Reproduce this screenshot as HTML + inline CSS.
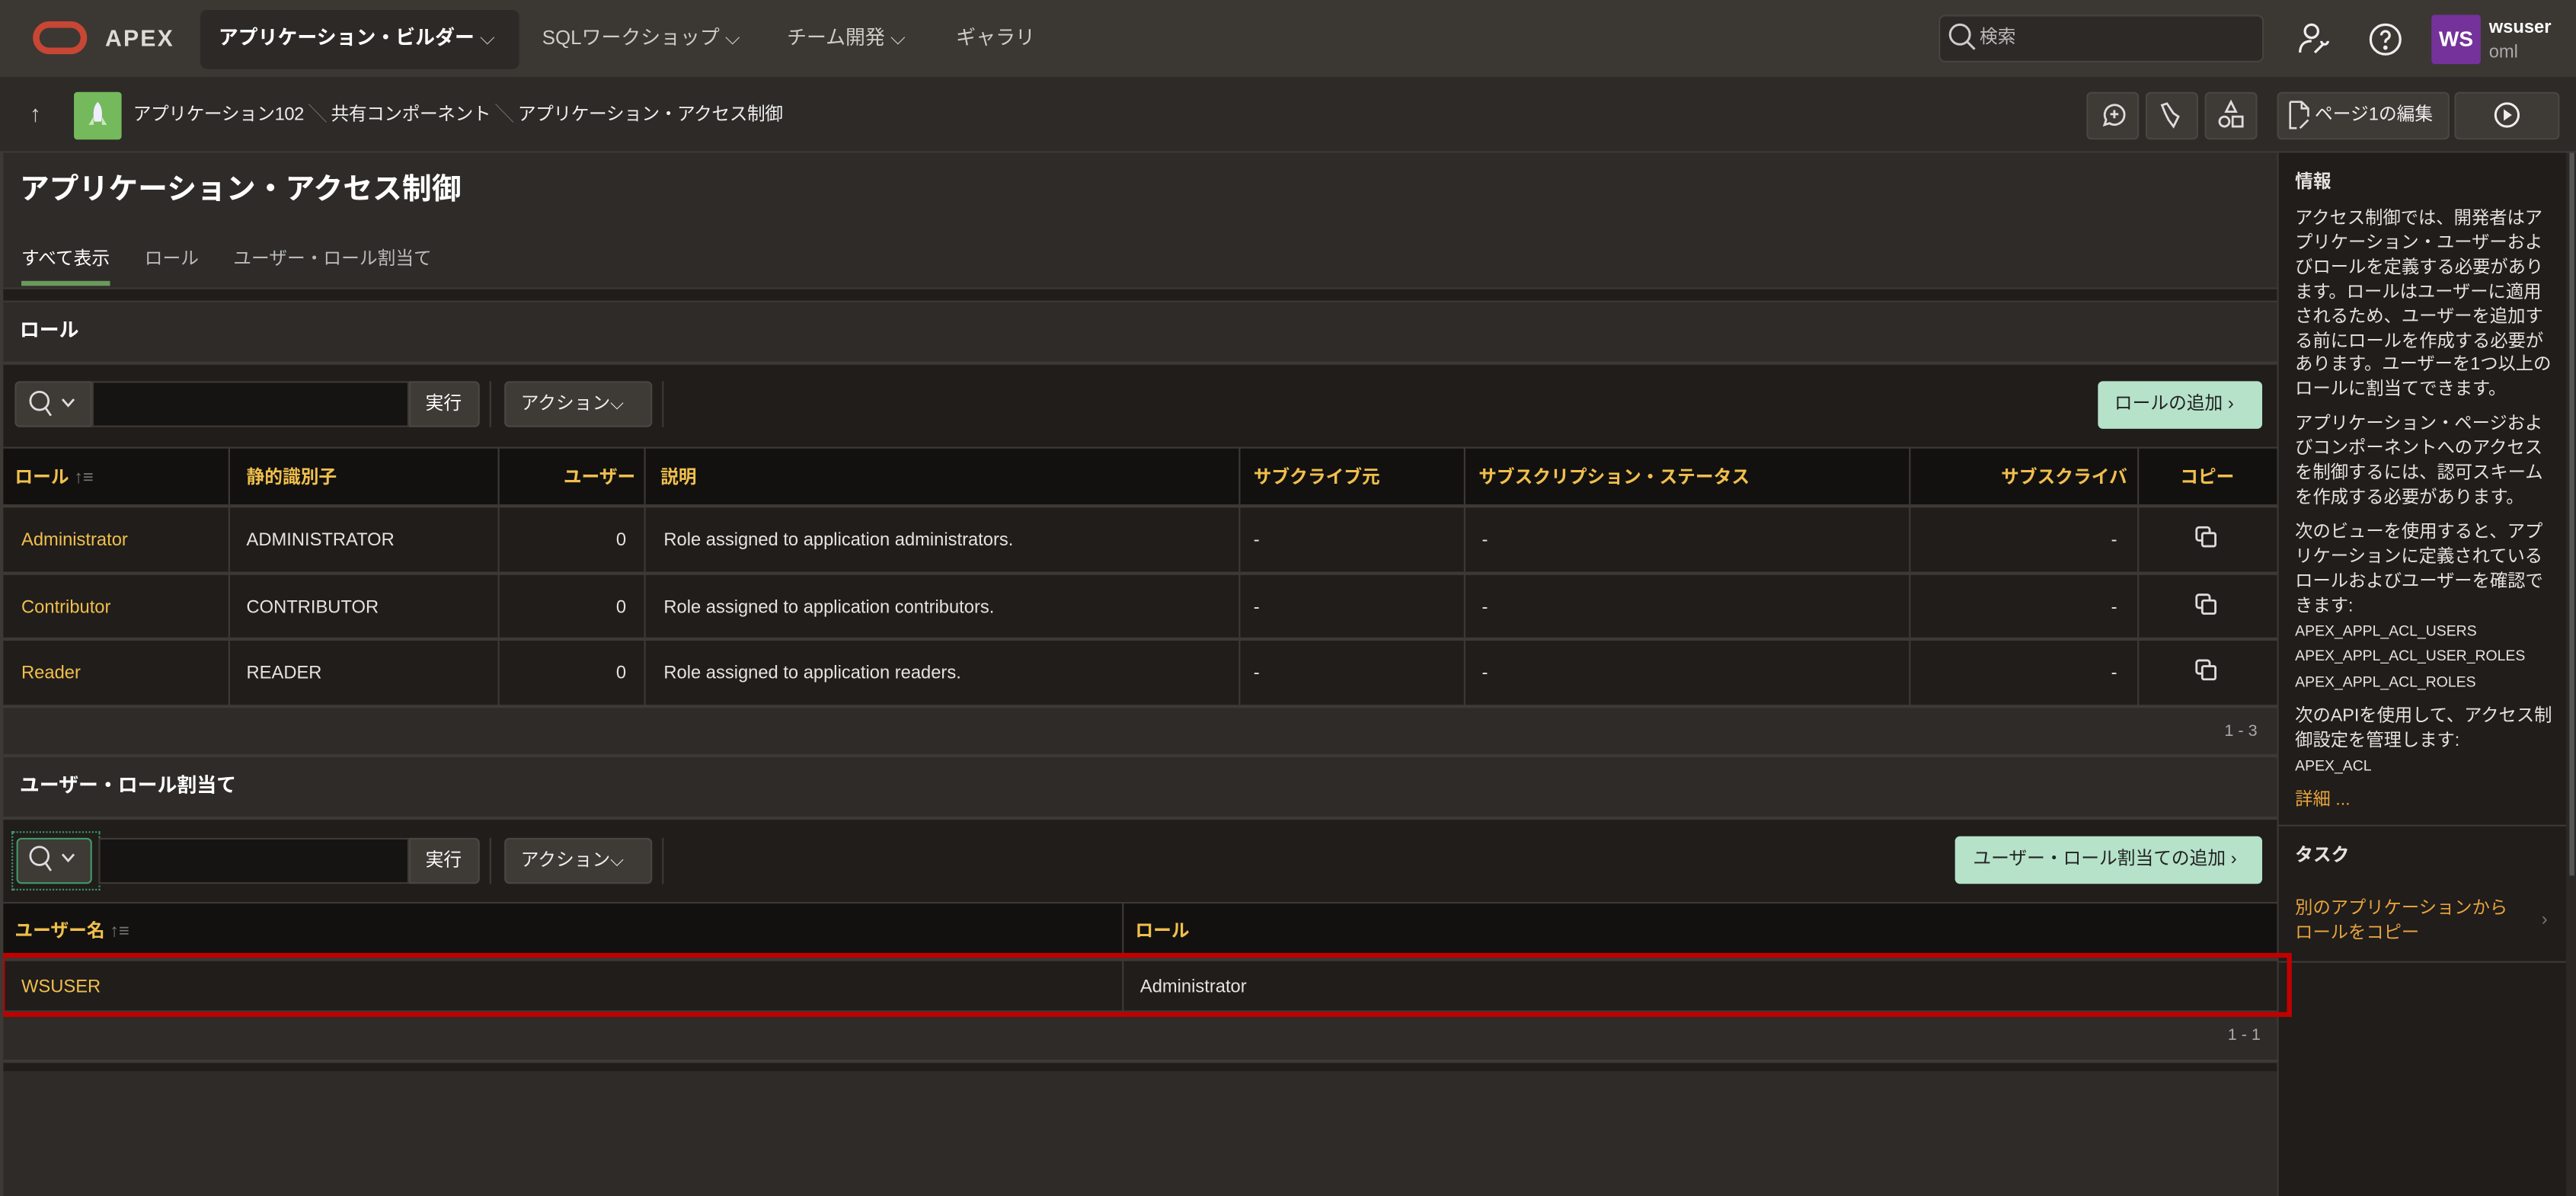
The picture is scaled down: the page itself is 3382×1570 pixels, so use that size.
<!DOCTYPE html>
<html><head><meta charset="utf-8">
<style>
*{box-sizing:border-box;margin:0;padding:0}
html,body{width:3382px;height:1570px;overflow:hidden;background:#2e2b28}
#root{position:absolute;left:0;top:0;width:1568px;height:728px;transform:scale(2.15689,2.15659);transform-origin:0 0;font-family:"Liberation Sans","Noto Sans CJK JP",sans-serif;color:#e6e3df;font-size:11px;background:#2e2b28}
.a{position:absolute}
.y{color:#f0bf4c}
.hd{font-weight:bold;color:#f0bf4c}
.btn{position:absolute;background:#3e3a36;border:1px solid #4a4642;border-radius:3px}
.vl{position:absolute;width:1px;background:#3d3935}
.hl{position:absolute;height:2px;background:#3d3935}
.t{position:absolute;white-space:nowrap;line-height:14px}
</style></head><body><div id="root">
<div class="a" style="left:0;top:0;width:1568px;height:47px;background:#3b3733"></div>
<div class="a" style="left:20px;top:13px;width:33px;height:20px;border:4px solid #c74634;border-radius:10px"></div>
<div class="t" style="left:64px;top:16px;font-size:14px;font-weight:bold;color:#dedbd7;letter-spacing:1px">APEX</div>
<div class="a" style="left:122px;top:6px;width:194px;height:36px;background:#2c2926;border-radius:4px"></div>
<div class="t" style="left:133px;top:16px;font-size:12px;font-weight:bold;color:#fff">アプリケーション・ビルダー <span style="font-weight:normal;color:#bbb">⌵</span></div>
<div class="t" style="left:330px;top:16px;font-size:12px;color:#cfcbc6">SQLワークショップ ⌵</div>
<div class="t" style="left:479px;top:16px;font-size:12px;color:#cfcbc6">チーム開発 ⌵</div>
<div class="t" style="left:582px;top:16px;font-size:12px;color:#cfcbc6">ギャラリ</div>
<div class="a" style="left:1180px;top:9px;width:198px;height:29px;background:#2c2926;border:1px solid #47433f;border-radius:4px"></div>
<svg class="a" style="left:1185px;top:13px" width="20" height="20" viewBox="0 0 20 20"><circle cx="8" cy="8" r="6" fill="none" stroke="#ccc" stroke-width="1.4"/><path d="M12 12l5 5" stroke="#ccc" stroke-width="1.4"/></svg>
<div class="t" style="left:1205px;top:16px;font-size:11px;color:#bbb">検索</div>
<svg class="a" style="left:1397px;top:12px" width="24" height="24" viewBox="0 0 24 24" fill="none" stroke="#eee" stroke-width="1.5"><circle cx="10" cy="7" r="4"/><path d="M3 20c0-5 3-7 7-7M12 20l5-5M16 13a2 2 0 1 0 4 0"/></svg>
<svg class="a" style="left:1440px;top:12px" width="24" height="24" viewBox="0 0 24 24" fill="none" stroke="#eee" stroke-width="1.5"><circle cx="12" cy="12" r="9"/><path d="M9.5 9.5a2.5 2.5 0 1 1 3.5 2.3c-.7.4-1 .9-1 1.7v.5"/><circle cx="12" cy="17" r=".6" fill="#eee"/></svg>
<div class="a" style="left:1480px;top:9px;width:30px;height:30px;background:#74329a;border-radius:2px;color:#fff;font-weight:bold;font-size:13px;text-align:center;line-height:30px">WS</div>
<div class="t" style="left:1515px;top:10px;font-size:11px;font-weight:bold;color:#fff">wsuser</div>
<div class="t" style="left:1515px;top:25px;font-size:11px;color:#aaa">oml</div>
<div class="a" style="left:0;top:47px;width:1568px;height:46px;background:#2d2a27;border-bottom:1px solid #3e3a36"></div>
<div class="t" style="left:18px;top:62px;font-size:14px;color:#ccc">↑</div>
<div class="a" style="left:45px;top:56px;width:29px;height:29px;background:#74b95b;border-radius:2px"></div>
<svg class="a" style="left:52px;top:61px" width="15" height="18" viewBox="0 0 15 18"><path d="M7.5 1c3 3 3 8 2 12h-4c-1-4-1-9 2-12z" fill="#eef"/><path d="M5 10l-3 5h3zM10 10l3 5h-3z" fill="#cde7c0"/></svg>
<div class="t" style="left:81px;top:63px;font-size:11px;color:#eee;letter-spacing:-0.2px">アプリケーション102 <span style="color:#777">╲</span> 共有コンポーネント <span style="color:#777">╲</span> アプリケーション・アクセス制御</div>
<div class="btn" style="left:1270px;top:56px;width:32px;height:29px"></div>
<div class="btn" style="left:1306px;top:56px;width:32px;height:29px"></div>
<div class="btn" style="left:1342px;top:56px;width:32px;height:29px"></div>
<div class="btn" style="left:1386px;top:56px;width:105px;height:29px"></div>
<div class="btn" style="left:1494px;top:56px;width:64px;height:29px"></div>
<svg class="a" style="left:1277px;top:61px" width="18" height="18" viewBox="0 0 18 18" fill="none" stroke="#ddd" stroke-width="1.3"><path d="M4 15l1-3a6 6 0 1 1 2 2z"/><path d="M10 6v5M7.5 8.5h5"/></svg>
<svg class="a" style="left:1313px;top:61px" width="18" height="18" viewBox="0 0 18 18" fill="none" stroke="#ddd" stroke-width="1.3"><path d="M3 3l3-1 4 6 3 2-3 6-3-4-2-4z"/></svg>
<svg class="a" style="left:1349px;top:60px" width="18" height="20" viewBox="0 0 18 20" fill="none" stroke="#ddd" stroke-width="1.3"><path d="M9 2l3 6H6z"/><circle cx="5" cy="14" r="3"/><rect x="10" y="11" width="6" height="6"/></svg>
<svg class="a" style="left:1392px;top:61px" width="16" height="19" viewBox="0 0 16 19" fill="none" stroke="#ddd" stroke-width="1.2"><path d="M2 1h7l4 4v5M2 1v16h4M9 1v4h4M8 17l5-5"/></svg>
<div class="t" style="left:1409px;top:63px;font-size:11px;color:#eee">ページ1の編集</div>
<svg class="a" style="left:1517px;top:61px" width="18" height="18" viewBox="0 0 18 18"><circle cx="9" cy="9" r="7" fill="none" stroke="#eee" stroke-width="1.4"/><path d="M7 5.5l5 3.5-5 3.5z" fill="#eee"/></svg>
<div class="a" style="left:1386px;top:93px;width:176px;height:635px;background:#201d1b;border-left:1px solid #3d3935"></div>
<div class="a" style="left:1562px;top:93px;width:6px;height:635px;background:#2b2825"></div>
<div class="a" style="left:1564px;top:93px;width:3px;height:440px;background:#555"></div>
<div class="t" style="left:1397px;top:104px;font-weight:bold;font-size:11px">情報</div>
<div class="a" style="left:1397px;top:126px;width:158px;font-size:10.8px;line-height:14.9px;color:#e6e3df">アクセス制御では、開発者はアプリケーション・ユーザーおよびロールを定義する必要があります。ロールはユーザーに適用されるため、ユーザーを追加する前にロールを作成する必要があります。ユーザーを1つ以上のロールに割当てできます。
<div style="height:6px"></div>アプリケーション・ページおよびコンポーネントへのアクセスを制御するには、認可スキームを作成する必要があります。
<div style="height:6px"></div>次のビューを使用すると、アプリケーションに定義されているロールおよびユーザーを確認できます:
<div style="font-size:9px;line-height:15.5px">APEX_APPL_ACL_USERS<br>APEX_APPL_ACL_USER_ROLES<br>APEX_APPL_ACL_ROLES</div>
<div style="height:6px"></div>次のAPIを使用して、アクセス制御設定を管理します:
<div style="font-size:9px;line-height:15px">APEX_ACL</div>
<div style="height:6px"></div><span style="color:#e8a33d">詳細 ...</span></div>
<div class="a" style="left:1387px;top:502px;width:175px;height:1px;background:#3d3935"></div>
<div class="t" style="left:1397px;top:514px;font-weight:bold;font-size:11px">タスク</div>
<div class="a" style="left:1397px;top:546px;font-size:10.8px;line-height:15px;color:#e8a33d">別のアプリケーションから<br>ロールをコピー</div>
<div class="t" style="left:1547px;top:553px;color:#777">›</div>
<div class="a" style="left:1387px;top:585px;width:175px;height:1px;background:#3d3935"></div>
<div class="t" style="left:12px;top:104px;font-size:18px;font-weight:bold;color:#fff;line-height:22px">アプリケーション・アクセス制御</div>
<div class="t" style="left:13px;top:151px;font-size:11px;color:#fff">すべて表示</div>
<div class="t" style="left:88px;top:151px;font-size:11px;color:#bbb">ロール</div>
<div class="t" style="left:142px;top:151px;font-size:11px;color:#bbb">ユーザー・ロール割当て</div>
<div class="a" style="left:13px;top:171px;width:54px;height:3px;background:#6a9a5c"></div>
<div class="a" style="left:0;top:175px;width:1386px;height:1px;background:#3d3935"></div>
<div class="a" style="left:0;top:176px;width:1386px;height:7px;background:#201d1b"></div>
<div class="a" style="left:2px;top:183px;width:1384px;height:37px;background:#2e2b28;border-top:1px solid #3d3935"></div>
<div class="t" style="left:12px;top:194px;font-weight:bold;font-size:12px;color:#fff">ロール</div>
<div class="a" style="left:2px;top:220px;width:1384px;height:52px;background:#201d1b;border-top:2px solid #3d3935"></div>
<div class="btn" style="left:9px;top:232px;width:47px;height:28px;border-radius:3px 0 0 3px"></div>
<svg class="a" style="left:16px;top:237px" width="32" height="18" viewBox="0 0 32 18" fill="none" stroke="#ddd" stroke-width="1.3"><circle cx="8" cy="7" r="5.5"/><path d="M11.5 11l3.5 5M22 6l3.5 4 3.5-4"/></svg>
<div class="a" style="left:56px;top:232px;width:193px;height:28px;background:#151413;border:1px solid #3e3a36"></div>
<div class="btn" style="left:249px;top:232px;width:43px;height:28px;border-radius:0 3px 3px 0"></div>
<div class="t" style="left:259px;top:239px;color:#fff">実行</div>
<div class="vl" style="left:298px;top:232px;height:28px"></div>
<div class="btn" style="left:307px;top:232px;width:90px;height:28px"></div>
<div class="t" style="left:317px;top:239px;color:#eee">アクション⌵</div>
<div class="vl" style="left:403px;top:232px;height:28px"></div>
<div class="a" style="left:1277px;top:232px;width:100px;height:29px;background:#b5e2c9;border-radius:3px"></div>
<div class="t" style="left:1287px;top:239px;color:#222">ロールの追加 ›</div>
<div class="a" style="left:2px;top:272px;width:1384px;height:36px;background:#121110;border-top:1px solid #3d3935"></div>
<div class="a" style="left:2px;top:308px;width:1384px;height:122px;background:#201d1b"></div>
<div class="hl" style="left:2px;top:307px;width:1384px"></div>
<div class="hl" style="left:2px;top:348px;width:1384px"></div>
<div class="hl" style="left:2px;top:388px;width:1384px"></div>
<div class="hl" style="left:2px;top:429px;width:1384px"></div>
<div class="vl" style="left:139px;top:272px;height:158px"></div>
<div class="vl" style="left:303px;top:272px;height:158px"></div>
<div class="vl" style="left:392px;top:272px;height:158px"></div>
<div class="vl" style="left:754px;top:272px;height:158px"></div>
<div class="vl" style="left:891px;top:272px;height:158px"></div>
<div class="vl" style="left:1162px;top:272px;height:158px"></div>
<div class="vl" style="left:1301px;top:272px;height:158px"></div>
<div class="t hd" style="left:9px;top:284px">ロール<span style="color:#777;font-weight:normal"> ↑≡</span></div>
<div class="t hd" style="left:150px;top:284px">静的識別子</div>
<div class="t hd" style="left:343px;top:284px">ユーザー</div>
<div class="t hd" style="left:402px;top:284px">説明</div>
<div class="t hd" style="left:763px;top:284px">サブクライブ元</div>
<div class="t hd" style="left:900px;top:284px">サブスクリプション・ステータス</div>
<div class="t hd" style="left:1218px;top:284px">サブスクライバ</div>
<div class="t hd" style="left:1327px;top:284px">コピー</div>
<div class="t y" style="left:13px;top:322px">Administrator</div>
<div class="t" style="left:150px;top:322px">ADMINISTRATOR</div>
<div class="t" style="left:375px;top:322px">0</div>
<div class="t" style="left:404px;top:322px">Role assigned to application administrators.</div>
<div class="t" style="left:763px;top:322px">-</div><div class="t" style="left:902px;top:322px">-</div><div class="t" style="left:1285px;top:322px">-</div>
<div class="t y" style="left:13px;top:363px">Contributor</div>
<div class="t" style="left:150px;top:363px">CONTRIBUTOR</div>
<div class="t" style="left:375px;top:363px">0</div>
<div class="t" style="left:404px;top:363px">Role assigned to application contributors.</div>
<div class="t" style="left:763px;top:363px">-</div><div class="t" style="left:902px;top:363px">-</div><div class="t" style="left:1285px;top:363px">-</div>
<div class="t y" style="left:13px;top:403px">Reader</div>
<div class="t" style="left:150px;top:403px">READER</div>
<div class="t" style="left:375px;top:403px">0</div>
<div class="t" style="left:404px;top:403px">Role assigned to application readers.</div>
<div class="t" style="left:763px;top:403px">-</div><div class="t" style="left:902px;top:403px">-</div><div class="t" style="left:1285px;top:403px">-</div>
<svg class="a" style="left:1336px;top:320px" width="14" height="14" viewBox="0 0 14 14" fill="none" stroke="#ddd" stroke-width="1.3"><rect x="1" y="1" width="8" height="8" rx="1.5"/><rect x="4.5" y="4.5" width="8" height="8" rx="1" fill="#201d1b"/></svg>
<svg class="a" style="left:1336px;top:361px" width="14" height="14" viewBox="0 0 14 14" fill="none" stroke="#ddd" stroke-width="1.3"><rect x="1" y="1" width="8" height="8" rx="1.5"/><rect x="4.5" y="4.5" width="8" height="8" rx="1" fill="#201d1b"/></svg>
<svg class="a" style="left:1336px;top:401px" width="14" height="14" viewBox="0 0 14 14" fill="none" stroke="#ddd" stroke-width="1.3"><rect x="1" y="1" width="8" height="8" rx="1.5"/><rect x="4.5" y="4.5" width="8" height="8" rx="1" fill="#201d1b"/></svg>
<div class="t" style="left:1354px;top:439px;font-size:10px;color:#aaa">1 - 3</div>
<div class="hl" style="left:2px;top:459px;width:1384px"></div>
<div class="t" style="left:12px;top:471px;font-weight:bold;font-size:12px;color:#fff">ユーザー・ロール割当て</div>
<div class="a" style="left:2px;top:497px;width:1384px;height:52px;background:#201d1b;border-top:2px solid #3d3935"></div>
<div class="btn" style="left:10px;top:510px;width:46px;height:28px;border:1px solid #3f9a67"></div>
<div class="a" style="left:7px;top:506px;width:54px;height:36px;border:1px dotted #3f9a67"></div>
<svg class="a" style="left:16px;top:514px" width="32" height="18" viewBox="0 0 32 18" fill="none" stroke="#ddd" stroke-width="1.3"><circle cx="8" cy="7" r="5.5"/><path d="M11.5 11l3.5 5M22 6l3.5 4 3.5-4"/></svg>
<div class="a" style="left:60px;top:510px;width:189px;height:28px;background:#151413;border:1px solid #3e3a36"></div>
<div class="btn" style="left:249px;top:510px;width:43px;height:28px;border-radius:0 3px 3px 0"></div>
<div class="t" style="left:259px;top:517px;color:#fff">実行</div>
<div class="vl" style="left:298px;top:510px;height:28px"></div>
<div class="btn" style="left:307px;top:510px;width:90px;height:28px"></div>
<div class="t" style="left:317px;top:517px;color:#eee">アクション⌵</div>
<div class="vl" style="left:403px;top:510px;height:28px"></div>
<div class="a" style="left:1190px;top:509px;width:187px;height:29px;background:#b5e2c9;border-radius:3px"></div>
<div class="t" style="left:1201px;top:516px;color:#222">ユーザー・ロール割当ての追加 ›</div>
<div class="a" style="left:2px;top:549px;width:1384px;height:34px;background:#121110;border-top:1px solid #3d3935"></div>
<div class="vl" style="left:683px;top:549px;height:68px"></div>
<div class="t hd" style="left:9px;top:560px">ユーザー名<span style="color:#777;font-weight:normal"> ↑≡</span></div>
<div class="t hd" style="left:691px;top:560px">ロール</div>
<div class="a" style="left:2px;top:583px;width:1384px;height:34px;background:#201d1b;border-top:2px solid #3d3935;border-bottom:2px solid #3d3935"></div>
<div class="vl" style="left:683px;top:585px;height:30px"></div>
<div class="t y" style="left:13px;top:594px">WSUSER</div>
<div class="t" style="left:694px;top:594px">Administrator</div>
<div class="a" style="left:0;top:580px;width:1395px;height:39px;border:3px solid #c00000"></div>
<div class="t" style="left:1356px;top:624px;font-size:10px;color:#aaa">1 - 1</div>
<div class="a" style="left:2px;top:645px;width:1384px;height:7px;background:#201d1b;border-top:2px solid #3d3935"></div>
<div class="a" style="left:0;top:93px;width:2px;height:635px;background:#3d3935"></div>
</div></body></html>
